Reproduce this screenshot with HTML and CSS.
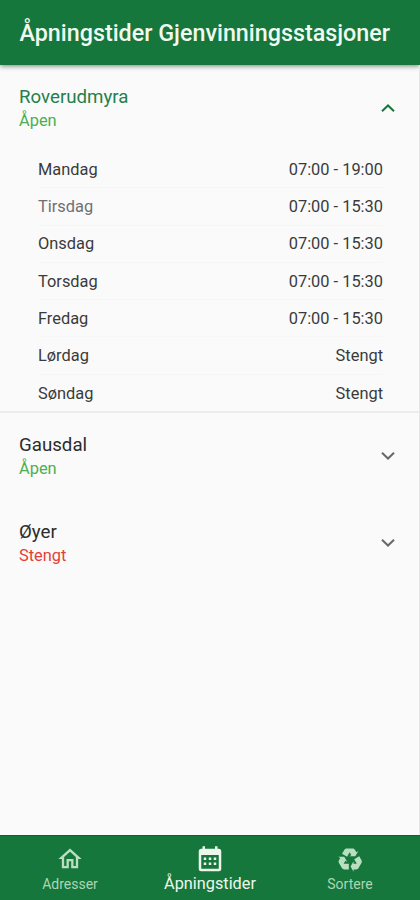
FILE: index.html
```
<!DOCTYPE html>
<html lang="no">
<head>
<meta charset="utf-8">
<title>Åpningstider</title>
<link rel="stylesheet" href="styles.css">
</head>
<body>
<header class="bar"><h1>Åpningstider Gjenvinningsstasjoner</h1></header>
<main>
  <section class="station open">
    <div class="head">
      <div><h2>Roverudmyra</h2><p class="status">Åpen</p></div>
      <svg class="chev" viewBox="0 0 14 8"><path d="M1 7.200l6-5.700 6 5.700"/></svg>
    </div>
    <ul class="days">
      <li><span>Mandag</span><span>07:00 - 19:00</span></li>
      <li><span class="dim">Tirsdag</span><span>07:00 - 15:30</span></li>
      <li><span>Onsdag</span><span>07:00 - 15:30</span></li>
      <li><span>Torsdag</span><span>07:00 - 15:30</span></li>
      <li><span>Fredag</span><span>07:00 - 15:30</span></li>
      <li><span>Lørdag</span><span>Stengt</span></li>
      <li><span>Søndag</span><span>Stengt</span></li>
    </ul>
  </section>
  <section class="station">
    <div class="head">
      <div><h2>Gausdal</h2><p class="status">Åpen</p></div>
      <svg class="chev" viewBox="0 0 14 8"><path d="M1 .8l6 5.700 6-5.700"/></svg>
    </div>
  </section>
  <section class="station">
    <div class="head">
      <div><h2>Øyer</h2><p class="status closed">Stengt</p></div>
      <svg class="chev" viewBox="0 0 14 8"><path d="M1 .8l6 5.700 6-5.700"/></svg>
    </div>
  </section>
</main>
<nav class="tabs">
  <a class="tab">
    <svg viewBox="0 0 24 24"><path d="M12 5.69l5 4.500V18h-2v-6H9v6H7v-7.810l5-4.500M12 3L2 12h3v8h6v-6h2v6h6v-8h3L12 3z"/></svg>
    <span>Adresser</span>
  </a>
  <a class="tab active">
    <svg viewBox="0 0 24 24"><path d="M9 10v2H7v-2h2m4 0v2h-2v-2h2m4 0v2h-2v-2h2m2-7a2 2 0 0 1 2 2v14a2 2 0 0 1-2 2H5a2 2 0 0 1-2-2V5a2 2 0 0 1 2-2h1V1h2v2h8V1h2v2h1m0 16V8H5v11h14M9 14v2H7v-2h2m4 0v2h-2v-2h2m4 0v2h-2v-2h2z"/></svg>
    <span>Åpningstider</span>
  </a>
  <a class="tab">
    <svg viewBox="0 0 24 24"><path d="M21.820 15.420l-2.500 4.330c-.490.860-1.400 1.310-2.320 1.250h-2v2l-2.500-4.500L15 14v2h2.820l-2.220-3.850 4.330-2.500 1.800 3.120c.520.770.590 1.800.090 2.650M9.210 3.060h5c.980 0 1.830.570 2.240 1.390l1 1.740 1.730-1-2.640 4.410-5.150.090 1.730-1-1.410-2.450-2.210 3.850-4.340-2.500 1.800-3.120c.410-.830 1.260-1.410 2.250-1.410M5.050 19.760l-2.500-4.330c-.490-.850-.420-1.870.090-2.640l1-1.730-1.730-1 5.140.080 2.650 4.420-1.730-1L6.560 16H11v5H7.400c-.930.070-1.850-.390-2.350-1.240z"/></svg>
    <span>Sortere</span>
  </a>
</nav>
</body>
</html>
```
FILE: styles.css
```
* { box-sizing: border-box; margin: 0; padding: 0; }
body {
  height: 900px;
  display: flex;
  flex-direction: column;
  background: #fafafa;
  color: #3a3a3a;
  font-family: Roboto, "Liberation Sans", sans-serif;
  overflow: hidden;
}
.bar {
  height: 65px;
  flex: none;
  padding: 0 19.500px;
  background: #15773b;
  color: #f1faf0;
  box-shadow: 0 1px 5px rgba(0, 0, 0, .5);
}
h1 { font-size: 23.300px; font-weight: 500; line-height: 66px; white-space: nowrap; }
main { flex: 1; border-right: 1px solid #e6e6e6; }
.head {
  height: 87px;
  padding: 20px 24px 0 19px;
  display: flex;
  justify-content: space-between;
}
h2 { font-size: 18.700px; font-weight: 400; line-height: 24px; color: #2c2c2c; }
.status { font-size: 16.400px; line-height: 24px; color: #4caf50; }
.status.closed { color: #e53e38; }
.chev {
  width: 14px;
  height: 8px;
  margin-top: 19px;
  fill: none;
  stroke: #686868;
  stroke-width: 2;
}
.open { height: 348px; border-bottom: 2px solid #ececec; }
.open .head { height: 86px; padding-top: 20px; }
.open h2 { color: #25804a; }
.open .chev { stroke: #15773b; }
.days { list-style: none; padding: 0 36px 0 38px; }
.days li {
  height: 37.300px;
  display: flex;
  justify-content: space-between;
  align-items: center;
  font-size: 16.400px;
  border-bottom: 1px solid #f6f6f6;
}
.days li:last-child { border-bottom: 0; }
.days .dim { color: #707070; }
.tabs {
  height: 65px;
  flex: none;
  display: flex;
  background: #15773b;
  border-top: 1px solid #0b642c;
}
.tab {
  flex: 1;
  display: flex;
  flex-direction: column;
  align-items: center;
  padding-top: 9px;
  color: #acd5b5;
  font-size: 14px;
}
.tab svg { width: 28px; height: 28px; fill: #b9dfc0; }
.tab span { line-height: 20px; margin-top: 1px; }
.tab.active { color: #edf8ec; font-size: 16.300px; }
.tab.active svg { width: 30px; height: 30px; margin-bottom: -2px; fill: #edf8ec; }
```
